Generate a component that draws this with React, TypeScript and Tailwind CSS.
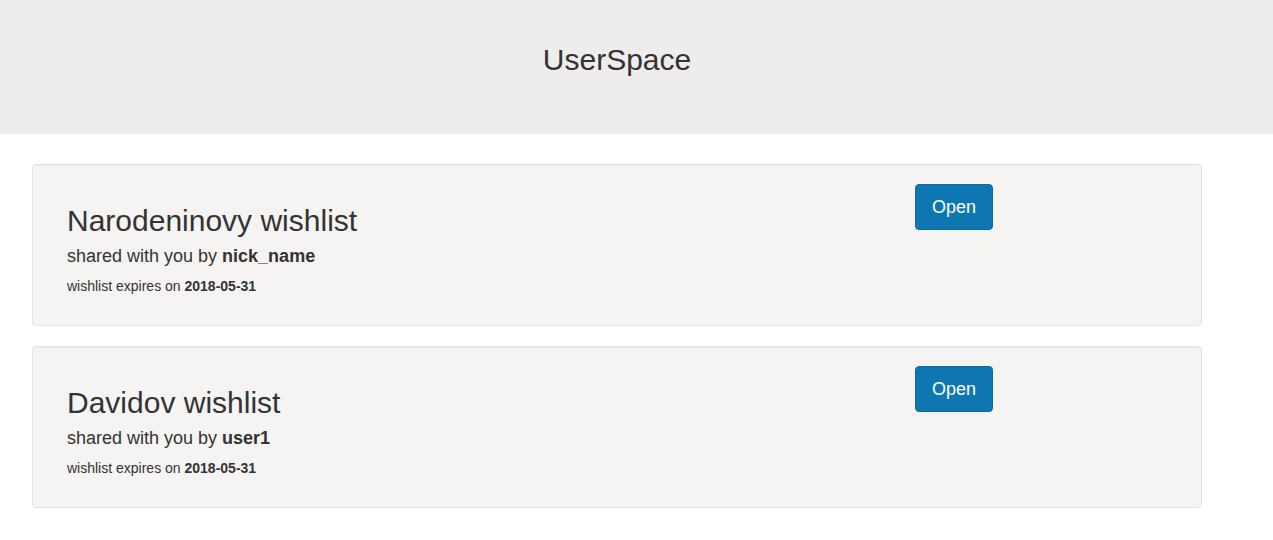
const wishlists = [
  { title: 'Narodeninovy wishlist', owner: 'nick_name', expires: '2018-05-31' },
  { title: 'Davidov wishlist', owner: 'user1', expires: '2018-05-31' }
]

function WishlistCard({ title, owner, expires }: { title: string; owner: string; expires: string }) {
  return (
    <div className="flex items-start rounded border border-[#e3e3e3] bg-[#f5f4f2] pt-[19px] pb-[19px] pl-[34px] mb-[20px] shadow-[inset_0_1px_1px_rgba(0,0,0,0.03)]">
      <div className="w-[848px]">
        <h2 className="mt-[20px] text-[30px] leading-[33px] text-[#333]">{title}</h2>
        <h4 className="mt-[10px] mb-[10px] text-[18px] leading-[19px] text-[#333]">
          shared with you by <b>{owner}</b>
        </h4>
        <p className="mb-[10px] text-[14px] leading-[20px] text-[#333]">
          wishlist expires on <b>{expires}</b>
        </p>
      </div>
      <button className="h-[46px] w-[78px] rounded border border-[#0b6a9f] bg-[#0e77b1] text-[18px] leading-[24px] text-white">
        Open
      </button>
    </div>
  )
}

export default function App() {
  return (
    <div className="min-h-[540px] bg-white font-['Liberation_Sans',Arial,sans-serif] text-[#333]">
      {/* Header */}
      <div className="h-[134px] bg-[#eeedeb]">
        <div className="ml-[32px] w-[1170px] pt-[43px] text-center">
          <h1 className="text-[30px] leading-[33px] text-[#333]">UserSpace</h1>
        </div>
      </div>

      {/* Wishlists */}
      <div className="ml-[32px] w-[1170px] pt-[30px]">
        {wishlists.map((w) => (
          <WishlistCard key={w.title} {...w} />
        ))}
      </div>
    </div>
  )
}
